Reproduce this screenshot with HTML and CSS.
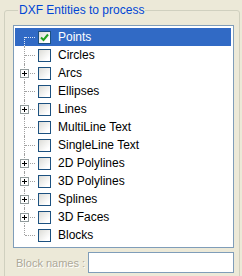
FILE: index.html
```html
<!DOCTYPE html>
<html lang="en">
<head>
    <meta charset="UTF-8">
    <meta name="viewport" content="width=device-width, initial-scale=1.0">
    <title>DXF Entities</title>

    <link rel="stylesheet" href="styles.css">

</head>
<body>

    <fieldset class="group">
        <legend>DXF Entities to process</legend>

        <div class="tree">
            <div class="row first sel">
                <span class="twist"></span>
                <span class="check on"><svg width="9" height="9" viewBox="0 0 9 9"><path d="M1 4.5 L3.5 7 L8 1.5" fill="none" stroke="#21a121" stroke-width="2"/></svg></span>
                <span class="label">Points</span>
            </div>
            <div class="row">
                <span class="twist"></span>
                <span class="check"></span>
                <span class="label">Circles</span>
            </div>
            <div class="row">
                <span class="twist"><i class="plus"></i></span>
                <span class="check"></span>
                <span class="label">Arcs</span>
            </div>
            <div class="row">
                <span class="twist"></span>
                <span class="check"></span>
                <span class="label">Ellipses</span>
            </div>
            <div class="row">
                <span class="twist"><i class="plus"></i></span>
                <span class="check"></span>
                <span class="label">Lines</span>
            </div>
            <div class="row">
                <span class="twist"></span>
                <span class="check"></span>
                <span class="label">MultiLine Text</span>
            </div>
            <div class="row">
                <span class="twist"></span>
                <span class="check"></span>
                <span class="label">SingleLine Text</span>
            </div>
            <div class="row">
                <span class="twist"><i class="plus"></i></span>
                <span class="check"></span>
                <span class="label">2D Polylines</span>
            </div>
            <div class="row">
                <span class="twist"><i class="plus"></i></span>
                <span class="check"></span>
                <span class="label">3D Polylines</span>
            </div>
            <div class="row">
                <span class="twist"><i class="plus"></i></span>
                <span class="check"></span>
                <span class="label">Splines</span>
            </div>
            <div class="row">
                <span class="twist"><i class="plus"></i></span>
                <span class="check"></span>
                <span class="label">3D Faces</span>
            </div>
            <div class="row last">
                <span class="twist"></span>
                <span class="check"></span>
                <span class="label">Blocks</span>
            </div>
        </div>

        <div class="names">
            <label for="block-names">Block names :</label>
            <input type="text" id="block-names" disabled/>
        </div>
    </fieldset>

</body>
</html>
```

FILE: styles.css
```css
*{
    margin: 0;padding:0;
    box-sizing: border-box
}
body{
    background:#ece9d8;
    font-family: "Liberation Sans", Arial, sans-serif;
    font-size:12px;
    color:#000;
    height:276px;
    overflow:hidden
}

.group{
    margin: 4px 2px 0 4px;
    padding: 8px 5px 0 8px;
    border:1px solid #d0d0bf;
    border-radius:3px;
    min-height:280px
}
.group legend{
    color:#0046d5;
    padding: 0 1px;
    margin-left:5px;
    line-height:13px
}

.tree{
    background:#fff;
    border:1px solid #7f9db9;
    padding: 2px 2px 1px 1px;
    height:223px
}

.row{
    display:flex;
    align-items:center;
    height:18px
}
.row.sel{
    background:#316ac5;
    color:#fff
}

/* tree lines */
.twist{
    width:20px;height:18px;
    position:relative;
    flex:none
}
.twist::before{
    content:"";
    position:absolute;
    left:9px;top:0;bottom:0;
    border-left:1px dotted #a0a0a0
}
.twist::after{
    content:"";
    position:absolute;
    left:10px;right:0;top:9px;
    border-top:1px dotted #a0a0a0
}
.first .twist::before{top:9px}
.last .twist::before{bottom:9px}
.sel .twist::before,.sel .twist::after{border-color:#dfe8f7}

.plus{
    position:absolute;
    left:5px;top:5px;
    width:9px;height:9px;
    background:#fff;
    border:1px solid #919b9c;
    z-index:1
}
.plus::before{
    content:"";
    position:absolute;
    left:1px;top:3px;width:5px;height:1px;background:#000
}
.plus::after{
    content:"";
    position:absolute;
    left:3px;top:1px;width:1px;height:5px;background:#000
}

.check{
    width:13px;height:13px;
    margin-left:3px;
    border:1px solid #1c5180;
    background:linear-gradient(135deg,#dcdcd7,#fff 80%);
    display:flex;
    justify-content:center;
    align-items:center;
    flex:none
}
.label{
    margin-left:7px;
    white-space:nowrap
}

.names{
    display:flex;
    align-items:center;
    margin-top:4px
}
.names label{
    color:#aca899;
    text-shadow:1px 1px 0 #fff;
    font-size:11px;
    white-space:nowrap;
    width:75px;
    flex:none;
    padding-left:3px
}
.names input{
    width:146px;height:21px;
    border:1px solid #7f9db9;
    background:#fff
}
```
